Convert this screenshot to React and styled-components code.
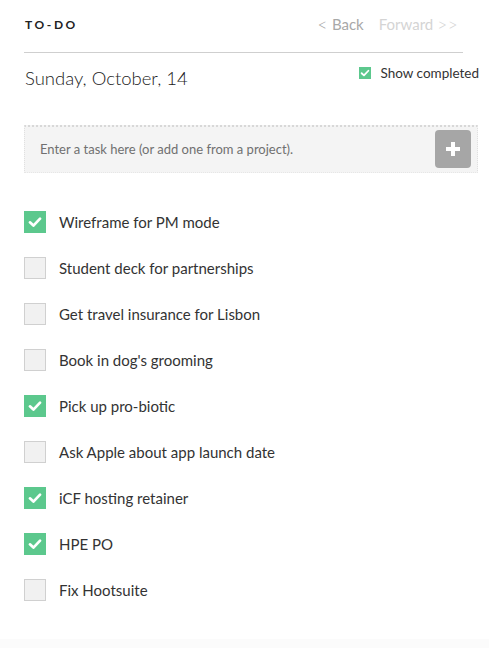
import React, { useState } from "react";
import styled, { createGlobalStyle } from "styled-components";

const GlobalStyle = createGlobalStyle`
  html, body {
    margin: 0;
    padding: 0;
    background: #fff;
  }
  body {
    font-family: "Lato", "Open Sans", sans-serif;
    color: #333;
  }
`;

const initialTasks = [
  { label: "Wireframe for PM mode", done: true },
  { label: "Student deck for partnerships", done: false },
  { label: "Get travel insurance for Lisbon", done: false },
  { label: "Book in dog's grooming", done: false },
  { label: "Pick up pro-biotic", done: true },
  { label: "Ask Apple about app launch date", done: false },
  { label: "iCF hosting retainer", done: true },
  { label: "HPE PO", done: true },
  { label: "Fix Hootsuite", done: false },
];

const Check = ({ size }) => (
  <svg width={size} height={size} viewBox="0 0 16 16">
    <path
      d="M3.5 8.3 L6.6 11.2 L12.5 5"
      fill="none"
      stroke="#fff"
      strokeWidth="2.4"
      strokeLinecap="round"
      strokeLinejoin="round"
    />
  </svg>
);

const App = () => {
  const [tasks, setTasks] = useState(initialTasks);
  const [showCompleted, setShowCompleted] = useState(true);

  const toggle = (index) =>
    setTasks((list) =>
      list.map((t, i) => (i === index ? { ...t, done: !t.done } : t))
    );

  return (
    <Page>
      <GlobalStyle />
      <Header>
        <Title>TO-DO</Title>
        <Nav>
          <NavLink>
            <Chevron>&lt;</Chevron>Back
          </NavLink>
          <NavLink disabled>
            Forward<Chevron>&gt;&gt;</Chevron>
          </NavLink>
        </Nav>
      </Header>
      <Divider />
      <DateRow>
        <DateText>Sunday, October, 14</DateText>
        <ShowToggle onClick={() => setShowCompleted((v) => !v)}>
          <SmallBox checked={showCompleted}>
            {showCompleted && <Check size={12} />}
          </SmallBox>
          Show completed
        </ShowToggle>
      </DateRow>
      <InputBar>
        <TaskInput placeholder="Enter a task here (or add one from a project)." />
        <AddButton>
          <svg width="16" height="16" viewBox="0 0 16 16">
            <rect x="6" y="1" width="4" height="14" fill="#fff" />
            <rect x="1" y="6" width="14" height="4" fill="#fff" />
          </svg>
        </AddButton>
      </InputBar>
      <List>
        {tasks.map((task, index) => (
          <Row key={index} onClick={() => toggle(index)}>
            <Box checked={task.done}>{task.done && <Check size={18} />}</Box>
            <Label>{task.label}</Label>
          </Row>
        ))}
      </List>
      <Footer />
    </Page>
  );
};

export default App;

const Page = styled.div`
  width: 489px;
  height: 648px;
  display: flex;
  flex-direction: column;
  padding-left: 24px;
  box-sizing: border-box;
  overflow: hidden;
`;

const Header = styled.div`
  display: flex;
  align-items: center;
  justify-content: space-between;
  width: 439px;
  height: 46px;
  padding-top: 1px;
`;

const Title = styled.div`
  font-size: 12px;
  font-weight: 700;
  letter-spacing: 2.6px;
  color: #222;
  padding-left: 1px;
`;

const Nav = styled.div`
  display: flex;
  align-items: center;
  gap: 15px;
  padding-right: 5px;
`;

const NavLink = styled.span`
  display: flex;
  align-items: center;
  gap: 4px;
  font-size: 15px;
  color: ${(props) => (props.disabled ? "#d4d4d4" : "#a8a8a8")};
  cursor: ${(props) => (props.disabled ? "default" : "pointer")};
`;

const Chevron = styled.span`
  font-size: 17px;
  font-weight: 300;
  line-height: 15px;
  letter-spacing: 0.5px;
`;

const Divider = styled.div`
  width: 439px;
  height: 1px;
  background: #cfcfcf;
  margin-top: 5px;
`;

const DateRow = styled.div`
  display: flex;
  align-items: center;
  justify-content: space-between;
  padding-right: 10px;
  margin-top: 11px;
`;

const DateText = styled.div`
  font-size: 18.5px;
  font-weight: 300;
  color: #222;
  padding-left: 1px;
  margin-top: 3px;
`;

const ShowToggle = styled.div`
  display: flex;
  align-items: center;
  gap: 10px;
  font-size: 13.5px;
  color: #333;
  cursor: pointer;
  margin-top: -7px;
`;

const SmallBox = styled.span`
  width: 12px;
  height: 12px;
  display: flex;
  align-items: center;
  justify-content: center;
  background: ${(props) => (props.checked ? "#5cc88d" : "#f0f0f0")};
`;

const InputBar = styled.div`
  display: flex;
  align-items: center;
  justify-content: space-between;
  width: 454px;
  height: 48px;
  margin-top: 36px;
  box-sizing: border-box;
  background: #f4f4f4;
  border-top: 2px dotted #d8d8d8;
  border-left: 1px dotted #e0e0e0;
  border-right: 1px dotted #e0e0e0;
  border-bottom: 1px dotted #e6e6e6;
  padding: 0 6px 2px 13px;
`;

const TaskInput = styled.input`
  flex: 1;
  border: none;
  background: transparent;
  font-family: "Lato", "Open Sans", sans-serif;
  font-size: 13px;
  color: #333;
  outline: none;
  &::placeholder {
    color: #707070;
  }
`;

const AddButton = styled.button`
  width: 36px;
  height: 38px;
  border: none;
  border-radius: 4px;
  background: #a6a6a6;
  display: flex;
  align-items: center;
  justify-content: center;
  cursor: pointer;
  padding: 0;
`;

const List = styled.div`
  display: flex;
  flex-direction: column;
  gap: 24px;
  margin-top: 38px;
`;

const Row = styled.div`
  display: flex;
  align-items: center;
  gap: 13px;
  height: 22px;
  cursor: pointer;
`;

const Box = styled.span`
  width: 22px;
  height: 22px;
  box-sizing: border-box;
  display: flex;
  align-items: center;
  justify-content: center;
  flex-shrink: 0;
  background: ${(props) => (props.checked ? "#5cc88d" : "#f1f1f1")};
  border: ${(props) => (props.checked ? "none" : "1px solid #d0d0d0")};
`;

const Label = styled.span`
  font-size: 15px;
  color: #333;
`;

const Footer = styled.div`
  margin-top: auto;
  margin-left: -24px;
  height: 9px;
  background: #fbfbfb;
`;
